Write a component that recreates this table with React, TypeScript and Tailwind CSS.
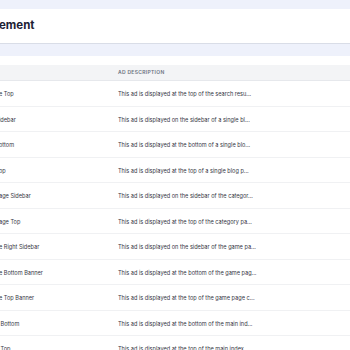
const rows = [
  { name: "e Top", desc: "This ad is displayed at the top of the search results page." },
  { name: "idebar", desc: "This ad is displayed on the sidebar of a single blog post." },
  { name: "ottom", desc: "This ad is displayed at the bottom of a single blog post." },
  { name: "op", desc: "This ad is displayed at the top of a single blog post." },
  { name: "age Sidebar", desc: "This ad is displayed on the sidebar of the category page." },
  { name: "age Top", desc: "This ad is displayed at the top of the category page." },
  { name: "e Right Sidebar", desc: "This ad is displayed on the sidebar of the game page." },
  { name: "e Bottom Banner", desc: "This ad is displayed at the bottom of the game page content." },
  { name: "e Top Banner", desc: "This ad is displayed at the top of the game page content." },
  { name: " Bottom", desc: "This ad is displayed at the bottom of the main index page." },
  { name: " Top", desc: "This ad is displayed at the top of the main index page." },
];

function truncate(text: string, max = 50) {
  return text.length > max ? text.slice(0, max) + "..." : text;
}

export default function App() {
  return (
    <div className="w-[350px] h-[350px] overflow-hidden bg-[#eef1fb] font-['Inter',sans-serif]">
      <div className="pt-[9px]">
        <div className="h-[35px] bg-white border-b border-[#d9dde7] flex items-center">
          <h1 className="-ml-[1px] text-[11.5px] font-bold text-[#1e2235]">
            ement
          </h1>
        </div>
      </div>

      <div className="mt-[12px] bg-white pt-[9px]">
        <div className="h-[16px] bg-[#f3f4f6] border-b border-[#e6e8ec] grid grid-cols-[118px_1fr] items-center">
          <div />
          <div className="text-[5px] font-semibold tracking-[0.06em] text-[#6b7280] uppercase">
            Ad Description
          </div>
        </div>

        {rows.map((row, i) => (
          <div
            key={i}
            className="h-[25.5px] pt-[2px] border-b border-[#f0f1f3] grid grid-cols-[118px_1fr] items-center text-[5.6px] text-[#35363f]"
          >
            <div className="-ml-[1px] whitespace-pre">{row.name}</div>
            <div className="whitespace-nowrap">{truncate(row.desc)}</div>
          </div>
        ))}
      </div>
    </div>
  );
}
